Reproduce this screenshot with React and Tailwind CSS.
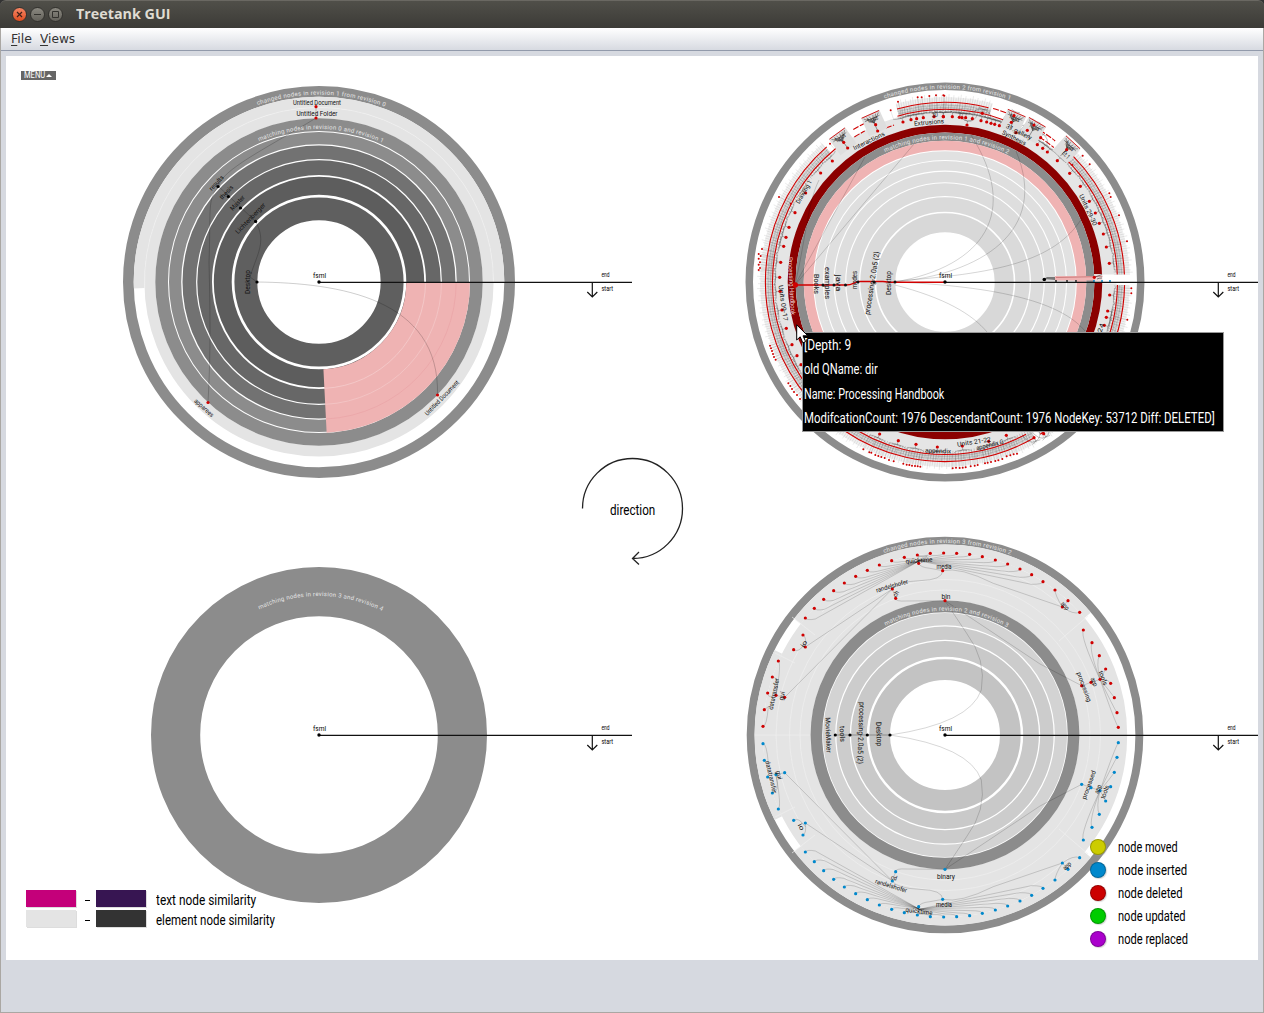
import React, { useLayoutEffect, useRef, useState } from "react";

const RAD = Math.PI / 180;
const at = (r, deg) => [r * Math.cos(deg * RAD), r * Math.sin(deg * RAD)];
const n2 = (v) => v.toFixed(2);

// Open arc from angle a to angle b (degrees, clockwise from east).
function arc(r, a, b) {
  const [x1, y1] = at(r, a);
  const [x2, y2] = at(r, b);
  return `M${n2(x1)} ${n2(y1)}A${r} ${r} 0 ${b - a > 180 ? 1 : 0} 1 ${n2(x2)} ${n2(y2)}`;
}

// Text squeezed or stretched to a given width.
function Fit({ w, className = "", children }) {
  const ref = useRef(null);
  const [scale, setScale] = useState(1);
  useLayoutEffect(() => {
    if (ref.current.offsetWidth) setScale(w / ref.current.offsetWidth);
  }, [w]);
  return (
    <span
      ref={ref}
      className={`inline-block origin-left whitespace-nowrap ${className}`}
      style={{ transform: `scaleX(${scale})` }}
    >
      {children}
    </span>
  );
}

function Ring({ o, i, fill, from, to }) {
  const r = (o + i) / 2;
  if (from === undefined) return <circle r={r} fill="none" stroke={fill} strokeWidth={o - i} />;
  return <path d={arc(r, from, to)} fill="none" stroke={fill} strokeWidth={o - i} />;
}

function Caption({ id, r, len, children }) {
  const a = (len / 2 / r) / RAD;
  return (
    <>
      <path id={id} d={arc(r, -90 - a + 0.7, -90 + a + 8)} fill="none" />
      <text fontSize="6" fill="#e6e6e6" textLength={len} lengthAdjust="spacing">
        <textPath href={`#${id}`}>{children}</textPath>
      </text>
    </>
  );
}

function Label({ x, y, rot = 0, w, size = 6.4, fill = "#111", children }) {
  return (
    <text
      transform={`translate(${x} ${y}) rotate(${rot})`}
      fontSize={size}
      fill={fill}
      textAnchor="middle"
      dominantBaseline="central"
      textLength={w}
      lengthAdjust="spacingAndGlyphs"
    >
      {children}
    </text>
  );
}

function Dots({ pts, fill = "#d00000", r = 1.6 }) {
  return pts.map(([x, y], k) => <circle key={k} cx={x} cy={y} r={r} fill={fill} />);
}

function Axis() {
  return (
    <g>
      <path d="M0 .4H313" stroke="#111" strokeWidth="1.2" />
      <circle r="1.7" fill="#000" />
      <path d="M273.3 0V14.6M268.3 10L273.3 15L278.3 10" fill="none" stroke="#111" strokeWidth="1.2" />
      <text x="-6" y="-4" fontSize="7.5" textLength="13" lengthAdjust="spacingAndGlyphs">fsml</text>
      <text x="282.5" y="-5.5" fontSize="6.4" textLength="8" lengthAdjust="spacingAndGlyphs">end</text>
      <text x="282.5" y="8.5" fontSize="6.4" textLength="11.5" lengthAdjust="spacingAndGlyphs">start</text>
    </g>
  );
}

function Chart({ top = -226, children }) {
  return (
    <svg className="block h-[452px] w-[626px] overflow-visible" viewBox={`-313 ${top} 626 452`}>
      {children}
      <Axis />
    </svg>
  );
}

function FirstRevision() {
  return (
    <Chart>
      <Ring o={196} i={185.3} fill="#8c8c8c" />
      <Ring o={185.3} i={174.5} fill="#e4e4e4" from={-182} to={0} />
      <Ring o={174.6} i={163.6} fill="#e4e4e4" />
      <path d={arc(174.5, -182, 0)} fill="none" stroke="#f2f2f2" strokeWidth=".6" />
      <Ring o={163.7} i={151} fill="#8c8c8c" />
      <Ring o={150} i={137.8} fill="#8c8c8c" />
      <Ring o={136.5} i={122.9} fill="#727272" />
      <Ring o={121.7} i={107} fill="#676767" />
      <Ring o={105.2} i={87.3} fill="#5d5d5d" />
      <Ring o={84.6} i={61.7} fill="#5f5f5f" />
      <Ring o={151} i={87.3} fill="#efb3b3" from={0} to={87.1} />
      <g fill="none" strokeWidth=".7">
        <path d={arc(106.5, 0, 87)} stroke="#f5d0d0" />
        <path d={arc(122.5, 0, 87)} stroke="#f4caca" />
        <path d={arc(137.2, 0, 87)} stroke="#e9a3a6" />
      </g>
      <g fill="none" stroke="#000" strokeOpacity=".28" strokeWidth=".7">
        <path d="M-62 0C20 1 121 16 118.5 113" />
        <path d="M-63.4 -60.6C-52 -40 -62 -28 -69 -5L-62 0" />
        <path d="M-63.4 -60.6L-100.5 -95.5C-98 -112 -52 -134 -3 -164V-175" />
        <path d="M-100.5 -95.5C-112 -83 -108 -72 -110 -20C-109 20 -108 70 -111 120.5" />
      </g>
      <Dots fill="#000" pts={[[-62, 0], [-63.4, -60.6], [-78.5, -74], [-90.7, -85.5], [-101, -95.5]]} />
      <Dots pts={[[-3, -175.3], [-3, -164], [-111, 120.5], [118.5, 113]]} />
      <Label x={-2} y={-179.5} w={48}>Untitled Document</Label>
      <Label x={-2} y={-168.5} w={41}>Untitled Folder</Label>
      <Label x={-102.5} y={-99} rot={-47} w={18}>results</Label>
      <Label x={-92.5} y={-89.5} rot={-47} w={17}>thesis</Label>
      <Label x={-81.5} y={-79} rot={-47} w={18}>Master</Label>
      <Label x={-68.5} y={-63.5} rot={-46} w={40}>Lichtenberger</Label>
      <Label x={-72} y={0} rot={-90} w={24} size={7.5}>Desktop</Label>
      <Label x={-115} y={126} rot={42} w={24}>apparees</Label>
      <Label x={123} y={116} rot={-46} w={46}>Untitled Document</Label>
      <Caption id="c1a" r={187.3} len={130}>changed nodes in revision 1 from revision 0</Caption>
      <Caption id="c1b" r={153} len={127}>matching nodes in revision 0 and revision 1</Caption>
    </Chart>
  );
}

// Deleted nodes of the second comparison, one list per quadrant, in thirds of a pixel.
const NW = [[489,141],[513,134],[530,131],[550,128],[582,125],[610,125],[407,149],[413,168],[311,202],[323,219],[277,258],[242,294],[197,354],[165,413],[147,457],[138,487],[131,514],[122,562],[119,607]];
const NE = [[10,125],[37,125],[58,127],[66,128],[77,128],[97,131],[81,150],[127,115],[123,137],[140,141],[153,145],[164,148],[178,152],[222,122],[214,142],[262,166],[228,173],[282,150],[302,188],[292,209],[308,220],[322,231],[352,257],[389,295],[421,334],[448,379],[466,414],[478,445],[490,477],[499,516],[508,565],[509,660],[503,708],[499,727],[493,751],[380,224],[463,607]];
const SW = [[120,34],[126,90],[139,145],[156,194],[171,227],[183,254],[419,462],[475,482],[528,493],[592,501],[667,498],[746,484],[799,466],[882,473],[911,461]];
const FAR_NW = [[117,366],[533,67],[545,67],[568,63],[588,61],[613,62],[452,106],[474,80],[270,206],[66,522],[56,537],[62,543],[56,551],[60,562],[56,569],[60,579],[56,585],[152,386]];
const FAR_NE = [[10,61],[428,242],[449,268],[508,355],[512,366],[537,421],[561,499],[574,640],[574,655],[562,734],[397,270]];
const FAR_SW = [[90,197],[93,205],[96,213],[99,222],[102,231],[107,239],[145,310],[151,318],[156,327],[162,336],[171,345],[180,357],[370,508],[388,517],[394,518],[406,525],[415,528],[424,531],[434,534],[447,540],[461,544],[490,551],[500,554],[508,555],[516,557],[525,558],[533,559],[541,560],[638,565],[648,563],[659,564],[668,563],[677,562],[692,559],[704,557],[713,555],[735,550],[743,548],[753,546],[766,543],[775,541],[787,537],[800,529],[811,526],[821,523],[831,521]];

function Hatch({ from, to, r1 = 171, r2 = 186, step = 0.75, tone = ".3" }) {
  const lines = [];
  for (let a = from, k = 0; a < to; a += step, k += 1) {
    const o = r2 + ((k * 7) % 5) - 2;
    const [x1, y1] = at(r1, a);
    const [x2, y2] = at(o, a + 0.25);
    lines.push(`M${n2(x1)} ${n2(y1)}L${n2(x2)} ${n2(y2)}`);
  }
  return <path d={lines.join("")} stroke="#555" strokeOpacity={tone} strokeWidth=".55" fill="none" />;
}

// Small fan-out of nodes with its own rim of deleted leaves.
function Cluster({ deg, r = 175, children }) {
  const [x, y] = at(r, deg);
  return (
    <g transform={`translate(${n2(x)} ${n2(y)}) rotate(${deg + 90})`}>
      <rect x="-10" y="-9" width="20" height="20" fill="#dedede" />
      <path d="M-8 -7L0 1L-5 -7M-2 -7L0 1L2 -7M5 -7L0 1L8 -7M-8 -4H8M0 1V10" stroke="#444" strokeWidth=".5" fill="none" />
      <path d="M-9.5 -8.5H9.5" stroke="#d00000" strokeWidth=".8" />
      <text textAnchor="middle" y="-1" fontSize="6" textLength="11" lengthAdjust="spacingAndGlyphs">{children}</text>
    </g>
  );
}

function SecondRevision() {
  const stems = [[NW, -205, -207], [NE, -5, -207], [SW, -205, -2]]
    .flatMap(([list, dx, dy]) => list.map(([x, y]) => [x / 3 + dx, y / 3 + dy]))
    .filter(([x, y]) => Math.hypot(x, y) > 158);
  const branches = stems.map(([x, y]) => {
    const a = Math.atan2(y, x) / RAD;
    const r = Math.hypot(x, y);
    const p = (rr, d) => at(rr, a + d).map(n2).join(" ");
    return `M${p(r, 0)}L${p(r + 4, 0)}M${p(r + 5, -1.4)}L${p(r + 4, 0)}L${p(r + 5, 1.4)}M${p(r + 4, 0)}Q${p(r + 4, 2.5)} ${p(171, 3)}M${p(r + 4, 0)}Q${p(r + 4, -2.5)} ${p(171, -3)}`;
  }).join("");
  const spikes = [[FAR_NW, -205, -207], [FAR_NE, -5, -207], [FAR_SW, -205, -2]]
    .flatMap(([list, dx, dy]) => list.map(([x, y]) => {
      const px = x / 3 + dx;
      const py = y / 3 + dy;
      const k = 172 / Math.hypot(px, py);
      return `M${n2(px)} ${n2(py)}L${n2(px * k)} ${n2(py * k)}`;
    })).join("");
  const spans = [[-105.5, -75], [-46, -2], [1, 58], [60, 228.5]];
  return (
    <Chart>
      <Ring o={199.5} i={192} fill="#8c8c8c" />
      <Ring o={171.5} i={157} fill="#e5e5e5" />
      {spans.map(([a, b]) => (
        <g key={a}>
          <Ring o={185} i={171} fill="#f0f0f0" from={a} to={b} />
          <Ring o={179} i={172} fill="#dcdcdc" from={a} to={b} />
          <Hatch from={a} to={b} tone=".22" />
          <Hatch from={a + 0.3} to={b} r1={169} r2={178} step={0.9} tone=".45" />
        </g>
      ))}
      <path d={spikes} fill="none" stroke="#000" strokeOpacity=".18" strokeWidth=".5" />
      <g fill="none" stroke="#444" strokeOpacity=".4" strokeWidth=".5">
        {spans.map(([a, b]) => <path key={a} d={arc(174.5, a, b) + arc(177, a, b)} />)}
      </g>
      <g fill="none" stroke="#d00000" strokeWidth="1.1">
        {[[-105.5, -76], [-44.5, -1.5], [1, 58], [60.5, 228.8]].map(([a, b]) => (
          <path key={a} d={arc(179.6, a, b)} />
        ))}
        {[[-106, -69], [-48, -1.5], [1, 60], [62, 230.7]].map(([a, b]) => (
          <path key={a} d={arc(172.5, a, b)} />
        ))}
        <path d={`${arc(180, -74.5, -70)}${arc(179, -58, -52)}${arc(173, -57, -51)}${arc(178, -121, -117)}${arc(171, -122, -118)}${arc(165, -111, -108)}`} strokeDasharray="6 1.5" />
      </g>
      <path d={branches} fill="none" stroke="#333" strokeOpacity=".6" strokeWidth=".5" />
      <Cluster deg={-126}>Topics</Cluster>
      <Cluster deg={-114}>Topics</Cluster>
      <Cluster deg={-67}>Topics</Cluster>
      <Cluster deg={-60} r={176}>Topics</Cluster>
      <Cluster deg={-47.5} r={181}>Topics</Cluster>

      <Ring o={157.3} i={149.4} fill="#8b0000" />
      <Ring o={149.4} i={141.3} fill="#8c8c8c" />
      <Ring o={141.3} i={131.8} fill="#efb3b3" />
      <Ring o={130.8} i={122} fill="#e1e1e1" />
      <Ring o={121} i={111.4} fill="#dfdfdf" />
      <Ring o={110.3} i={99.8} fill="#dedede" />
      <Ring o={98.7} i={86} fill="#dcdcdc" />
      <Ring o={84.7} i={70.3} fill="#dadada" />
      <Ring o={68.7} i={49.7} fill="#d8d8d8" />

      <g fill="none" stroke="#000" strokeOpacity=".24" strokeWidth=".7">
        <path d="M-150 3L-80 -125M-150 3L-31 -138M-150 3C-139 -45 -137 -80 -126 -102" />
        <path d="M-50 0C40 -16 75 -70 26 -147" />
        <path d="M-50 0C35 -8 105 -50 71 -131" />
        <path d="M-50 -1C50 -8 110 -20 137 -64" />
        <path d="M-50 0C70 5 120 25 140 49" />
        <path d="M-50 3C0 16 27 32 42 50" />
      </g>
      <rect x="149" y="-8" width="9" height="8" fill="#eddcdc" />
      <rect x="110" y="-6" width="40" height="4.5" fill="#efb3b3" />
      <path d="M99 -3L102 -5H110V-2Z" fill="#777" />
      <path d="M111 -4.5L158 -5.5" stroke="#a44" strokeWidth=".5" />
      <rect x="157.4" y="-7.5" width="30" height="9" fill="#fff" />
      <path d="M150 -5L157 -7.5M152 -3Q154 -4 157 -4" stroke="#333" strokeWidth=".6" fill="none" />
      <Dots fill="#000" pts={[[99.3, -2.5]]} r={1.8} />
      <Dots fill="#111" pts={[[111, -1], [122, -1], [131, -1]]} r={0.9} />
      <Dots fill="#0088cc" pts={[[149, -1], [157, -1], [165, -1]]} r={1} />
      <path d="M-150 3L-99 3C-92 3 -91 0 -86 -.5L-62 -.5L-55 .3H0" fill="none" stroke="#d00000" strokeWidth="1.4" />

      <g transform="translate(-205 -207) scale(.33333)"><Dots r={4.8} pts={NW} /><Dots r={3} pts={FAR_NW} /></g>
      <g transform="translate(-5 -207) scale(.33333)"><Dots r={4.8} pts={NE} /><Dots r={3} pts={FAR_NE} /></g>
      <g transform="translate(-205 -2) scale(.33333)"><Dots r={4.8} pts={SW} /><Dots r={3} pts={FAR_SW} /></g>
      <Dots fill="#111" pts={[[-50, 0], [-71, 0], [-87, 0], [-99.5, 3], [-111, 3], [-122, 3]]} r={1.5} />
      <circle cx="-149.7" cy="3" r="2.7" fill="#d00000" />

      <Label x={-57} y={1} rot={-90} w={24} size={7.5}>Desktop</Label>
      <Label x={-73} y={1} rot={-81} w={64} size={7.5}>processing-2.0a5 (2)</Label>
      <Label x={-90.5} y={-2} rot={-90} w={18} size={7.5}>modes</Label>
      <Label x={-107} y={1} rot={90} w={17}>java</Label>
      <Label x={-118} y={1} rot={90} w={32}>examples</Label>
      <Label x={-129} y={2} rot={90} w={20}>Books</Label>
      <Label x={-153.5} y={4} rot={87} w={58} fill="#f1d4d4">Processing Handbook</Label>
      <Label x={-162} y={21} rot={82} w={36}>Units 09-17</Label>
      <Label x={-141} y={-90} rot={-60} w={26}>Drawing 1</Label>
      <Label x={-76} y={-141} rot={-26} w={34}>Interactions</Label>
      <Label x={-16} y={-159.5} rot={-5} w={30}>Extrusions</Label>
      <Label x={-10} y={-167} rot={-3} w={6}>3D</Label>
      <Label x={74} y={-150} rot={27} w={28}>31.gallery</Label>
      <Label x={69} y={-144} rot={27} w={26}>Synthesis</Label>
      <Label x={121} y={-127} rot={46} w={8}>Et.1</Label>
      <Label x={143} y={-72} rot={65} w={34}>Units 29-30</Label>
      <Label x={156} y={46} rot={-72} w={9}>24</Label>
      <Label x={29} y={160} rot={-9} w={34}>Units 21-22</Label>
      <Label x={-7} y={169} rot={2} w={26}>appendix</Label>
      <Label x={45} y={163} rot={-14} w={28}>appendix G</Label>
      <Caption id="c2a" r={193.3} len={128}>changed nodes in revision 2 from revision 1</Caption>
      <Caption id="c2b" r={142.8} len={127}>matching nodes in revision 1 and revision 2</Caption>
    </Chart>
  );
}

function FourthRevision() {
  return (
    <Chart top={-227}>
      <Ring o={168} i={118.8} fill="#8c8c8c" />
      <Caption id="c3" r={139} len={127}>matching nodes in revision 3 and revision 4</Caption>
    </Chart>
  );
}

// Upper half of the third comparison; the lower half is its mirror image.
const LEFT_RIM = [[196,264],[223,235],[251,208],[281,182],[313,159],[347,139],[382,121],[418,105],[455,92],[493,82],[532,75],[571,70],[611,69]];
const RIGHT_RIM = [[650,70],[689,73],[727,80],[766,90],[803,102],[840,117],[875,134],[909,155]];
const OTHERS = [[536,100],[608,122],[457,177],[467,205],[615,212],[189,315],[196,351],[161,359],[115,393],[97,441],[83,489],[73,539],[69,589],[108,496],[134,502],[945,180],[984,212],[967,231],[1019,247],[1030,300],[1056,338],[1078,377],[1097,417],[1112,460],[1123,503],[1131,548],[1135,592],[1080,448],[1053,457],[1025,467]];
const TOOLS = [[1030,300],[1056,338],[1078,377],[1097,417],[1112,460],[1123,503],[1131,548],[1135,592]];

function Half({ fill }) {
  const rim = [...LEFT_RIM, ...RIGHT_RIM];
  const threads = rim
    .map(([x, y]) => (x < 536 ? `M${x} ${y}q5 8 30 3L536 94` : `M536 92L${x - 35} ${y + 8}Q${x} ${y + 8} ${x} ${y}`))
    .join("");
  const tools = TOOLS.map(([x, y]) => `M${x} ${y}Q${x - 10} ${y + (y < 448 ? 20 : -15)} 1080 448`).join("");
  return (
    <g transform="translate(-205 -205) scale(.33333)">
      <path
        d={`${threads}${tools}M536 100Q540 112 570 115L608 122Q608 150 540 152Q470 155 457 177L467 205Q466 215 500 213L615 212M457 177L196 351Q200 320 189 315M161 359Q175 370 196 340M457 177L134 502L108 496Q80 505 83 489M108 496Q120 440 97 441M108 496Q125 400 115 393M85 530Q80 590 69 589M85 530L73 539M608 122Q660 110 760 160L967 231Q945 195 945 180M984 212L967 231Q1000 255 1019 247M615 212L900 402L1025 467L1080 448M615 212L680 310Q740 390 724 480Q690 580 450 615`}
        fill="none"
        stroke="#000"
        strokeOpacity=".24"
        strokeWidth="2"
      />
      <Dots r={4.8} fill={fill} pts={[...rim, ...OTHERS]} />
    </g>
  );
}

function ThirdRevision() {
  return (
    <Chart top={-227}>
      <Ring o={198.3} i={190.4} fill="#8c8c8c" />
      <Ring o={190.5} i={182} fill="#e4e4e4" from={-142.3} to={-40} />
      <Ring o={190.5} i={182} fill="#e4e4e4" from={40} to={142.3} />
      <Ring o={190.5} i={182} fill="#e4e4e4" from={153.5} to={206.5} />
      <Ring o={182.2} i={134.2} fill="#e4e4e4" />
      <g fill="none" stroke="#efefef" strokeWidth=".7">
        <circle r="145" /><circle r="155.5" /><path d={arc(169, 150, 210)} /><path d={arc(174, -135, -45)} /><path d={arc(174, 45, 135)} />
        <path d="M-170 -82L-150 -72M-153 -118L-130 -100M114 -94L143 -119M-170 82L-150 72M-153 118L-130 100M114 94L143 119M-190 0H-135" />
      </g>
      <Ring o={134.4} i={122.8} fill="#8c8c8c" />
      <Ring o={122} i={109.8} fill="#d3d3d3" />
      <Ring o={108.6} i={95.2} fill="#cccccc" />
      <Ring o={93.9} i={78.2} fill="#c9c9c9" />
      <Ring o={75.7} i={55} fill="#c3c3c3" />
      <Half fill="#d00000" />
      <g transform="scale(1 -1)"><Half fill="#0088cc" /></g>
      <path d="M-110 0H-55" stroke="#666" strokeWidth=".6" />
      <Dots fill="#000" pts={[[-55, 0], [-77.7, 0], [-95, 0], [-109.7, 0]]} />
      <Label x={-66} y={-1} rot={88} w={24} size={7.5}>Desktop</Label>
      <Label x={-84} y={-2} rot={92} w={62} size={7.5}>processing-2.0a5 (2)</Label>
      <Label x={-103} y={-1} rot={88} w={16} size={7}>tools</Label>
      <Label x={-117} y={0} rot={88} w={35} size={7}>MovieMaker</Label>
      <Label x={-26} y={-174.5} rot={-4} w={27}>quicktime</Label>
      <Label x={-1} y={-168} w={15}>media</Label>
      <Label x={-53} y={-149} rot={-16} w={33}>randelshofer</Label>
      <Label x={-49} y={-141} rot={-60} w={6}>ch</Label>
      <Label x={1} y={-138.5} w={9}>bin</Label>
      <Label x={-141} y={-91} rot={-55} w={7}>io</Label>
      <Label x={-171} y={-41} rot={-78} w={32}>datatransfer</Label>
      <Label x={-163} y={-39} rot={-78} w={9}>gui</Label>
      <Label x={120} y={-129} rot={45} w={9}>app</Label>
      <Label x={139} y={-48} rot={70} w={31}>processing</Label>
      <Label x={149} y={-53} rot={68} w={9}>app</Label>
      <Label x={158} y={-57} rot={70} w={15}>tools</Label>
      <Label x={1} y={142} w={18}>binary</Label>
      <Label x={-51} y={143} rot={18} w={6}>cd</Label>
      <Label x={-54} y={151} rot={17} w={33}>randelshofer</Label>
      <Label x={-1} y={170} w={16}>media</Label>
      <Label x={-26} y={176.5} rot={7} w={27}>quicktime</Label>
      <Label x={-144} y={92} rot={60} w={7}>io</Label>
      <Label x={-174} y={42} rot={77} w={33}>datatransfer</Label>
      <Label x={-166} y={40} rot={78} w={9}>gui</Label>
      <Label x={122} y={131} rot={-45} w={9}>app</Label>
      <Label x={144} y={50} rot={-70} w={30}>processed</Label>
      <Label x={153} y={54} rot={-68} w={9}>app</Label>
      <Label x={160} y={57} rot={-70} w={14}>tools</Label>
      <Caption id="c4a" r={192} len={129}>changed nodes in revision 3 from revision 2</Caption>
      <Caption id="c4b" r={124.3} len={127}>matching nodes in revision 2 and revision 3</Caption>
    </Chart>
  );
}

const KINDS = [
  ["node moved", 60, "bg-[#cccc00]"],
  ["node inserted", 69, "bg-[#0088cc]"],
  ["node deleted", 65, "bg-[#cc0000]"],
  ["node updated", 68, "bg-[#00cc00]"],
  ["node replaced", 70, "bg-[#aa00cc]"],
];

const SCALES = [
  ["text node similarity", 100, "bg-[#c4007a]", "bg-[#371552]"],
  ["element node similarity", 119, "bg-[#e4e4e4]", "bg-[#333333]"],
];

const TIP = [
  ["[Depth: 9", 47],
  ["old QName: dir", 74],
  ["Name: Processing Handbook", 140],
  ["ModifcationCount: 1976 DescendantCount: 1976 NodeKey: 53712 Diff: DELETED]", 411],
];

function TitleBar() {
  const button = "flex size-[15px] items-center justify-center rounded-full border border-[#33322e]";
  return (
    <header className="flex h-7 shrink-0 items-center rounded-t-md border-t border-[#6a6862] bg-linear-to-b from-[#504f49] to-[#3c3b37] pl-[12px]">
      <div className="flex gap-[3px]">
        <span className={`${button} bg-linear-to-b from-[#f58563] to-[#df4c1d]`}>
          <svg className="size-[7px]" viewBox="0 0 7 7"><path d="M1 1L6 6M6 1L1 6" stroke="#40211a" strokeWidth="1.2" /></svg>
        </span>
        <span className={`${button} bg-linear-to-b from-[#8a8880] to-[#64625b]`}>
          <svg className="size-[7px]" viewBox="0 0 7 7"><path d="M0 3.5H7" stroke="#33322e" /></svg>
        </span>
        <span className={`${button} bg-linear-to-b from-[#8a8880] to-[#64625b]`}>
          <svg className="size-[7px]" viewBox="0 0 7 7"><path d="M.5 .5H6.5V6.5H.5Z" fill="none" stroke="#33322e" /></svg>
        </span>
      </div>
      <h1 className="mb-px ml-[13px] font-['Open_Sans','Noto_Sans',sans-serif] text-[14px] leading-5 font-bold text-[#dfdbd2]">
        <Fit w={94}>Treetank GUI</Fit>
      </h1>
    </header>
  );
}

function MenuBar() {
  return (
    <nav className="flex h-[23px] shrink-0 gap-[9px] border-b border-[#929aab] bg-linear-to-b from-white to-[#d7dae1] pl-[10px] font-['DejaVu_Sans',sans-serif] text-[12.5px] leading-[22px] text-[#333]">
      <span className="w-5"><Fit w={21}><u className="underline-offset-2">F</u>ile</Fit></span>
      <span><Fit w={35}><u className="underline-offset-2">V</u>iews</Fit></span>
    </nav>
  );
}

export default function App() {
  return (
    <div className="h-[1013px] w-[1264px] overflow-hidden bg-[#333]">
      <div className="flex h-full flex-col font-[Roboto,sans-serif]">
        <TitleBar />
        <div className="flex grow flex-col border-x border-b border-[#aaa7a3] bg-[#d6d9e0]">
          <MenuBar />
          <main className="relative mt-[5px] ml-[5px] grid h-[904px] w-[1252px] shrink-0 grid-cols-[626px_626px] grid-rows-[452px_452px] overflow-hidden bg-white">
            <FirstRevision />
            <SecondRevision />
            <FourthRevision />
            <ThirdRevision />

            <div className="absolute top-[15px] left-[15px] flex h-[9px] w-[35px] items-center gap-px bg-[#666] pl-[3px] text-[9px] leading-[9px] text-white">
              <span className="w-[21px]"><Fit w={21}>MENU</Fit></span>
              <svg className="h-[3px] w-[6px]" viewBox="0 0 6 3"><path d="M0 3L3 0L6 3Z" fill="#fff" /></svg>
            </div>

            <div className="absolute top-[400px] left-[574px] flex size-[105px] items-center justify-center pt-[3px] text-[14px] text-black">
              <svg className="absolute inset-0 size-[105px] overflow-visible" viewBox="0 0 105 105" fill="none" stroke="#222" strokeWidth="1.3">
                <path d="M2.5 52.5A50 50 0 1 1 52.5 102.5M59 96L52.5 102.5L59 108.5" />
              </svg>
              <span className="w-[45px] whitespace-nowrap"><Fit w={45}>direction</Fit></span>
            </div>

            <div className="absolute top-[834px] left-5 flex flex-col gap-[3px]">
              {SCALES.map(([name, w, a, b]) => (
                <div key={name} className="flex h-[17px] items-center">
                  <span className={`h-[17px] w-[50px] shadow-[1px_1px_0_#ddd] ${a}`} />
                  <span className="mt-[3px] ml-[9px] h-px w-[5px] bg-black" />
                  <span className={`ml-[6px] h-[17px] w-[50px] shadow-[1px_1px_0_#ddd] ${b}`} />
                  <span className="ml-[10px] pt-[3px] text-[14px] leading-[17px] text-black"><Fit w={w}>{name}</Fit></span>
                </div>
              ))}
            </div>

            <div className="absolute top-[779px] left-[1084px] flex flex-col">
              {KINDS.map(([name, w, c]) => (
                <div key={name} className="flex h-[23px] items-center gap-[12px]">
                  <span className={`size-4 rounded-full border border-black/25 shadow-[1px_1px_1px_#9996] ${c}`} />
                  <span className="text-[14px] leading-[22px] text-black"><Fit w={w}>{name}</Fit></span>
                </div>
              ))}
            </div>

            <div className="absolute top-[276px] left-[796px] flex h-[100px] w-[422px] flex-col border border-[#999] bg-black pl-px text-[14px] leading-[24.3px] text-white">
              {TIP.map(([line, w]) => (
                <div key={line}><Fit w={w}>{line}</Fit></div>
              ))}
            </div>

            <svg className="absolute top-[268px] left-[790px] h-[20px] w-[13px]" viewBox="0 0 13 20">
              <path d="M.7 .8V16L4.2 12.8L6.8 18.8L9.6 17.6L7 11.8H11.8Z" fill="#fff" stroke="#000" />
            </svg>
          </main>
        </div>
      </div>
    </div>
  );
}
